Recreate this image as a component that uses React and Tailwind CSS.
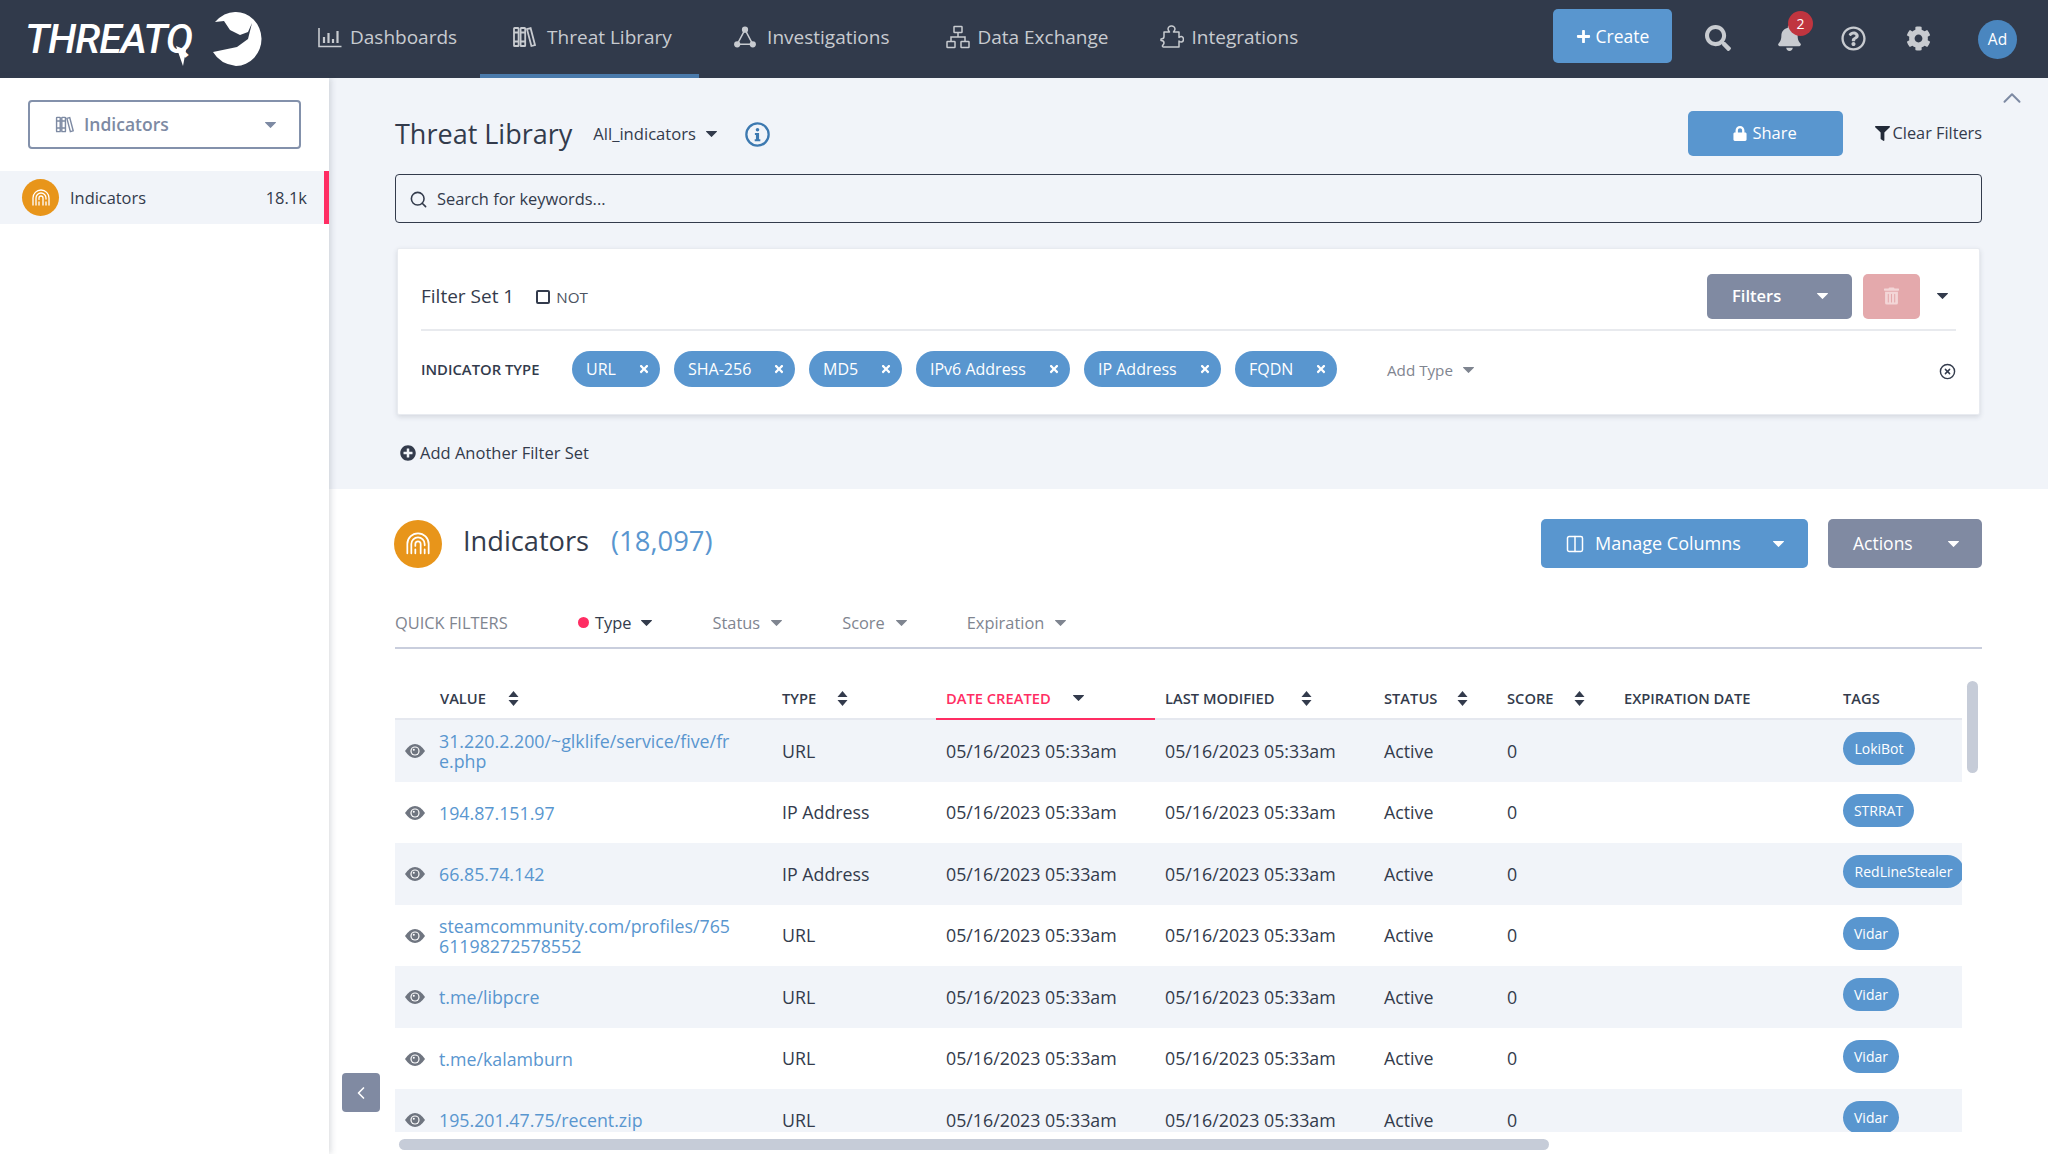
import React from "react";
import { FaSearch, FaBell, FaRegQuestionCircle, FaCog, FaPlus, FaLock, FaFilter, FaTrashAlt, FaPlusCircle, FaTimes } from "react-icons/fa";
import { Search, ChevronUp, ChevronLeft, CircleX, Columns2 } from "lucide-react";

const Caret = ({ className = "" }) => (
  <svg viewBox="0 0 11 6" className={`h-[6px] w-[11px] shrink-0 fill-current ${className}`}><path d="M0.5 0h10a.5.5 0 0 1 .35.85l-5 5a.5.5 0 0 1-.7 0l-5-5A.5.5 0 0 1 .5 0z" /></svg>
);
const Sort = () => (
  <svg viewBox="0 0 11 15" className="h-[15px] w-[11px] fill-[#333b4c]"><path d="M5.5 0l5 6H.5z" /><path d="M5.5 15l5-6H.5z" /></svg>
);
const Books = ({ className = "" }) => (
  <svg viewBox="0 0 24 24" className={className} fill="none" stroke="currentColor" strokeWidth="1.8">
    <rect x="2" y="3" width="4.6" height="18" rx=".6" /><rect x="8.6" y="3" width="4.6" height="18" rx=".6" />
    <path d="M15 4.2l3.6-1 4.4 16.8-3.6 1zM2 7.5h4.6M2 16.5h4.6M8.6 7.5h4.6M8.6 16.5h4.6" />
  </svg>
);
const Bars = ({ className = "" }) => (
  <svg viewBox="0 0 24 24" className={className} fill="none" stroke="currentColor" strokeWidth="1.6">
    <path d="M1 3v18.5h22.5" /><path strokeWidth="2.2" d="M6 18v-6M10.5 18V8M15 18v-4M19.5 18V6" />
  </svg>
);
const Graph = ({ className = "" }) => (
  <svg viewBox="0 0 24 24" className={className} fill="none" stroke="currentColor" strokeWidth="1.6">
    <path d="M12 4L3.5 20h17z" />
    <circle cx="12" cy="4" r="2.6" fill="currentColor" /><circle cx="3.5" cy="20" r="2.6" fill="currentColor" /><circle cx="20.5" cy="20" r="2.6" fill="currentColor" />
  </svg>
);
const Sitemap = ({ className = "" }) => (
  <svg viewBox="0 0 24 24" className={className} fill="none" stroke="currentColor" strokeWidth="1.5">
    <rect x="8" y="1.5" width="8" height="6" rx=".6" /><rect x="1" y="16.5" width="8" height="6" rx=".6" /><rect x="15" y="16.5" width="8" height="6" rx=".6" />
    <path d="M12 7.5V12M5 16.5V12h14v4.5" />
  </svg>
);
const PuzzleOutline = ({ className = "" }) => (
  <svg viewBox="0 0 24 24" className={className} fill="none" stroke="currentColor" strokeWidth="1.5" strokeLinejoin="round">
    <path d="M4 7h5.500C8.500 5.800 8 5 8 4a3.200 3.200 0 0 1 3.500-3A3.200 3.200 0 0 1 15 4c0 1-.5 1.800-1.500 3H19v5.500c1-.8 1.700-1.200 2.500-1 1.300.3 2 1.500 2 2.800s-.8 2.500-2 2.700c-.9.200-1.500-.2-2.500-1V22H3.500c-.7 0-1.300-.6-1-1.300.5-1 1.500-1.500 1.500-2.700 0-1.700-1.500-2.500-3-2.500v-1.500C3 14 4 13 4 11.500z" />
  </svg>
);
const InfoCircle = ({ className = "" }) => (
  <svg viewBox="0 0 24 24" className={className}>
    <circle cx="12" cy="12" r="10.700" fill="none" stroke="currentColor" strokeWidth="2.200" />
    <circle cx="12" cy="7.500" r="1.700" fill="currentColor" />
    <path d="M9.500 10.500h4v6h1.200v2H9.300v-2h1.200v-4h-1z" fill="currentColor" />
  </svg>
);
const Finger = ({ className = "" }) => (
  <svg viewBox="0 0 24 24" className={className} fill="none" stroke="#fff" strokeWidth="1.3" strokeLinecap="round">
    <path d="M4 19v-7a8 8 0 0 1 16 0v7" /><path d="M7 19v-7a5 5 0 0 1 10 0v1M17 16v3" /><path d="M10 19v-3M10 13.5V12a2 2 0 0 1 4 0v7" />
  </svg>
);
const Eye = () => (
  <svg viewBox="0 0 20 14" className="h-[14px] w-[20px]">
    <path d="M0 7C3 2.2 6.4 0 10 0s7 2.2 10 7c-3 4.8-6.4 7-10 7S3 11.800 0 7z" fill="#6f7580" />
    <circle cx="10" cy="7" r="4.600" fill="#fff" /><circle cx="10" cy="7" r="3.400" fill="#6f7580" /><circle cx="8.800" cy="5.800" r="1" fill="#fff" />
  </svg>
);
const Rhino = () => (
  <svg viewBox="0 0 52 54" className="h-[54px] w-[52px] fill-white">
    <path d="M3 10Q12 0 23 0A26 27 0 0 1 24 54Q8 52 1 40L25 35L36 27L40 11L36 20L28 23L18 18L12 9Z" />
  </svg>
);

const navs = [
  { label: "Dashboards", Icon: Bars, ml: "ml-[33px]", w: "w-6", tw: "gap-2" },
  { label: "Threat Library", Icon: Books, ml: "ml-[23px]", w: "w-6", tw: "gap-[11px]", active: true },
  { label: "Investigations", Icon: Graph, ml: "ml-[35px]", w: "w-[22px]", tw: "gap-[11px]" },
  { label: "Data Exchange", Icon: Sitemap, ml: "ml-[57px]", w: "w-6", tw: "gap-[7px]" },
  { label: "Integrations", Icon: PuzzleOutline, ml: "ml-[51px]", w: "w-6", tw: "gap-[8px]" },
];

const chips = [
  ["URL", "w-[88px]"], ["SHA-256", "w-[121px]"], ["MD5", "w-[93px]"], ["IPv6 Address", "w-[154px]"], ["IP Address", "w-[137px]"], ["FQDN", "w-[102px]"],
];

const rows = [
  ["31.220.2.200/~glklife/service/five/fre.php", "URL", "LokiBot", "w-[72px]"],
  ["194.87.151.97", "IP Address", "STRRAT", "w-[71px]"],
  ["66.85.74.142", "IP Address", "RedLineStealer", "w-[121px]"],
  ["steamcommunity.com/profiles/76561198272578552", "URL", "Vidar", "w-[56px]"],
  ["t.me/libpcre", "URL", "Vidar", "w-[56px]"],
  ["t.me/kalamburn", "URL", "Vidar", "w-[56px]"],
  ["195.201.47.75/recent.zip", "URL", "Vidar", "w-[56px]"],
];

const grid = "grid grid-cols-[35px_342px_164px_219px_219px_123px_117px_219px_129px]";

function HeadCell({ label, gap, red, sort = true }) {
  return (
    <div className={`relative flex items-center pl-[10px] ${gap} ${red ? "text-[#ff2d63]" : ""}`}>
      <span className="text-[14.7px] font-semibold leading-[20px]">{label}</span>
      {sort && !red && <Sort />}
      {red && <Caret className="text-[#333b4c]" />}
    </div>
  );
}

function Quick({ label, ml, gap, dark }) {
  return (
    <div className={`flex items-center ${ml} ${gap} ${dark ? "text-[#333b4c]" : "text-[#7f8590]"}`}>
      {dark && <span className="mr-[6px] h-[11px] w-[11px] rounded-full bg-[#ff2d63]" />}
      <span className={`text-[16.4px] ${dark ? "mr-[10px]" : ""}`}>{label}</span>
      <Caret className={dark ? "text-[#333b4c]" : "text-[#7f8590]"} />
    </div>
  );
}

export default function App() {
  return (
    <div className="relative flex h-[1154px] w-[2048px] flex-col overflow-hidden bg-white text-[#333b4c] [font-family:'Open_Sans',sans-serif]">
      <header className="flex h-[78px] shrink-0 items-stretch bg-[#313a4b] text-[#c8cbd0]">
        <div className="flex w-[285px] shrink-0 items-center pl-[25px]">
          <span className="relative w-[173px] text-[41px] font-medium italic leading-none tracking-[-1.1px] text-white [font-family:Roboto,sans-serif]">
            THREATQ
            <svg viewBox="0 0 12 20" className="absolute left-[150px] top-[27px] h-[20px] w-[12px] fill-white"><path d="M1 0l10 4-3 16z" /></svg>
          </span>
          <span className="ml-[14px]"><Rhino /></span>
        </div>
        {navs.map(({ label, Icon, ml, w, tw, active }) => (
          <div key={label} className={`flex items-center ${ml} ${tw} ${active ? "w-[219px] border-b-4 border-[#4a7aab] pl-[32px]" : "pb-[4px]"}`}>
            <Icon className={`${w} h-6 shrink-0`} />
            <span className="whitespace-nowrap text-[19px]">{label}</span>
          </div>
        ))}
        <div className="ml-auto flex items-center pr-[31px]">
          <button className="-mt-[6px] flex h-[54px] w-[119px] items-center justify-center gap-[5px] rounded-[5px] bg-[#5996cf] text-[17.5px] text-white"><FaPlus className="h-[15px] w-[15px]" />Create</button>
          <FaSearch className="-mt-[2px] ml-[33px] h-[26px] w-[26px]" />
          <div className="relative ml-[47px] h-[26px] w-[23px] -mt-[2px]">
            <FaBell className="h-[26px] w-[23px]" />
            <span className="absolute left-[10px] top-[-14px] flex h-[25px] w-[25px] items-center justify-center rounded-full bg-[#c0353f] text-[14px] text-white">2</span>
          </div>
          <FaRegQuestionCircle className="-mt-[2px] ml-[40px] h-[25px] w-[25px]" />
          <FaCog className="-mt-[2px] ml-[40px] h-[25px] w-[25px]" />
          <span className="ml-[47px] flex h-[39px] w-[39px] items-center justify-center rounded-full bg-[#4a86bf] pt-[2px] text-[15.5px] text-white">Ad</span>
        </div>
      </header>

      <div className="flex min-h-0 flex-1">
        <aside className="relative z-10 w-[329px] shrink-0 bg-white shadow-[2px_0_6px_rgba(60,70,90,0.18)]">
          <div className="mx-[28px] mt-[22px] flex h-[49px] w-[273px] items-center rounded-[4px] border-2 border-[#8391ab] pl-[25px] pr-[23px] text-[#7d8aa3]">
            <Books className="h-[19px] w-[19px]" />
            <span className="ml-[10px] text-[17.5px] font-semibold">Indicators</span>
            <Caret className="ml-auto" />
          </div>
          <div className="mt-[22px] flex h-[53px] items-center border-r-[5px] border-[#ff2d63] bg-[#f1f4f9] pl-[22px] pr-[17px]">
            <span className="flex h-[37px] w-[37px] items-center justify-center rounded-full bg-[#e8951a]"><Finger className="h-[24px] w-[24px]" /></span>
            <span className="ml-[11px] mt-[1px] text-[16.4px]">Indicators</span>
            <span className="ml-auto mt-[1px] text-[16.5px]">18.1k</span>
          </div>
        </aside>

        <main className="flex min-w-0 flex-1 flex-col">
          <section className="h-[411px] shrink-0 bg-[#f1f4f9] px-[66px] pt-[33px]">
            <div className="flex h-[45px] items-center">
              <h1 className="text-[27px] font-normal leading-none">Threat Library</h1>
              <span className="ml-[21px] mt-[2px] text-[16.6px]">All_indicators</span>
              <Caret className="ml-[10px]" />
              <InfoCircle className="ml-[28px] mt-[2px] h-[25px] w-[25px] text-[#3d79b0]" />
              <button className="ml-auto flex h-[45px] w-[155px] items-center justify-center gap-[5px] rounded-[5px] bg-[#5996cf] text-[16.5px] text-white"><FaLock className="h-[15px] w-[14px]" />Share</button>
              <div className="ml-[32px] flex items-center gap-[3px] text-[16.3px]"><FaFilter className="h-[15px] w-[15px] text-[#222a38]" />Clear Filters</div>
            </div>
            <div className="mt-[18px] flex h-[49px] items-center rounded-[4px] border border-[#333b4c] pl-[13px] pt-[2px]">
              <Search className="h-[19px] w-[19px]" strokeWidth={2} />
              <span className="ml-[9px] text-[16.4px]">Search for keywords...</span>
            </div>
            <div className="mx-[2px] mt-[25px] h-[167px] rounded-[2px] border border-[#e8ebf0] bg-white px-[23px] shadow-[0_2px_5px_rgba(60,70,90,0.16)]">
              <div className="flex h-[82px] items-center border-b-2 border-[#e8eaee] pt-[14px]">
                <span className="text-[19px]">Filter Set 1</span>
                <span className="ml-[22px] mt-[2px] h-[14px] w-[14px] rounded-[2px] border-2 border-[#333b4c]" />
                <span className="ml-[6px] mt-[2px] text-[15.2px] text-[#4c5361]">NOT</span>
                <button className="ml-auto flex h-[45px] w-[145px] items-center rounded-[5px] bg-[#808aa2] pl-[25px] pr-[24px] text-[16.5px] font-semibold text-white">Filters<Caret className="ml-auto h-[5px] w-[10px]" /></button>
                <button className="ml-[11px] flex h-[45px] w-[57px] items-center justify-center rounded-[5px] bg-[#e4a9ac]"><FaTrashAlt className="h-[18px] w-[15px] text-[#f3d6d7]" /></button>
                <Caret className="ml-[17px] mr-[8px]" />
              </div>
              <div className="flex items-center pt-[20px]">
                <span className="w-[151px] text-[14.8px] font-semibold">INDICATOR TYPE</span>
                <div className="flex gap-[14px]">
                  {chips.map(([c, w]) => (
                    <span key={c} className={`flex h-[36px] ${w} items-center rounded-full bg-[#5996cf] pl-[14px] pr-[10px] text-[16px] text-white`}>{c}<FaTimes className="ml-auto h-[12px] w-[12px]" /></span>
                  ))}
                </div>
                <span className="ml-[50px] mt-[2px] text-[15.2px] text-[#7f8590]">Add Type</span>
                <Caret className="ml-[10px] mt-[2px] h-[5px] w-[10px] text-[#7f8590]" />
                <CircleX className="ml-auto mt-[4px] h-[17px] w-[17px]" strokeWidth={2} />
              </div>
            </div>
            <div className="ml-[5px] mt-[26px] flex items-center gap-[4px] text-[16.5px]"><FaPlusCircle className="h-[16px] w-[16px]" />Add Another Filter Set</div>
          </section>

          <section className="min-h-0 flex-1 px-[66px] pt-[30px]">
            <div className="flex h-[49px] items-center">
              <span className="-ml-[1px] flex h-[48px] w-[48px] items-center justify-center rounded-full bg-[#e8951a]"><Finger className="h-[32px] w-[32px]" /></span>
              <span className="ml-[21px] -mt-[5px] text-[27.2px]">Indicators</span>
              <span className="ml-[22px] -mt-[5px] text-[27.4px] text-[#5996cf]">(18,097)</span>
              <button className="ml-auto flex h-[49px] w-[267px] items-center rounded-[5px] bg-[#5996cf] pl-[24px] pr-[24px] text-[18px] text-white"><Columns2 className="h-[20px] w-[20px]" strokeWidth={1.8} /><span className="ml-[10px]">Manage Columns</span><Caret className="ml-auto" /></button>
              <button className="ml-[20px] flex h-[49px] w-[154px] items-center rounded-[5px] bg-[#808aa2] pl-[25px] pr-[23px] text-[17.5px] text-white">Actions<Caret className="ml-auto" /></button>
            </div>
            <div className="mt-[32px] flex h-[49px] items-center border-b-2 border-[#c9cedd] pb-[1px]">
              <span className="w-[183px] text-[16.4px] text-[#7f8590]">QUICK FILTERS</span>
              <Quick label="Type" dark ml="" gap="" />
              <Quick label="Status" ml="ml-[60px]" gap="gap-[11px]" />
              <Quick label="Score" ml="ml-[60px]" gap="gap-[11px]" />
              <Quick label="Expiration" ml="ml-[60px]" gap="gap-[11px]" />
            </div>
            <div className="h-[483px] w-[1567px] overflow-hidden">
              <div className={`${grid} h-[71px] items-stretch border-b-2 border-[#e5e8ef]`}>
                <div />
                <div className="flex items-end pb-[10px]"><HeadCell label="VALUE" gap="gap-[22px]" /></div>
                <div className="flex items-end pb-[10px]"><HeadCell label="TYPE" gap="gap-[21px]" /></div>
                <div className="-mb-[2px] flex items-end border-b-2 border-[#ff2d63] pb-[10px]"><HeadCell label="DATE CREATED" gap="gap-[22px]" red /></div>
                <div className="flex items-end pb-[10px]"><HeadCell label="LAST MODIFIED" gap="gap-[26px]" /></div>
                <div className="flex items-end pb-[10px]"><HeadCell label="STATUS" gap="gap-[20px]" /></div>
                <div className="flex items-end pb-[10px]"><HeadCell label="SCORE" gap="gap-[20px]" /></div>
                <div className="flex items-end pb-[10px]"><HeadCell label="EXPIRATION DATE" sort={false} /></div>
                <div className="flex items-end pb-[10px]"><HeadCell label="TAGS" sort={false} /></div>
              </div>
              {rows.map(([v, t, tag, w], i) => (
                <div key={v} className={`${grid} h-[61.5px] items-center pt-[1px] text-[17.8px] ${i % 2 === 0 ? "bg-[#f1f4f9]" : "bg-white"}`}>
                  <div className="flex justify-end pr-[5px]"><Eye /></div>
                  <div className="pl-[9px] pr-[37px] leading-[20px] text-[#5996cf] [overflow-wrap:anywhere]">{v}</div>
                  <div className="pl-[10px]">{t}</div>
                  <div className="pl-[10px]">05/16/2023 05:33am</div>
                  <div className="pl-[10px]">05/16/2023 05:33am</div>
                  <div className="pl-[10px]">Active</div>
                  <div className="pl-[10px]">0</div>
                  <div />
                  <div className="h-full overflow-hidden pl-[10px] pt-[11px]">
                    <span className={`flex h-[33px] ${w} items-center justify-center rounded-full bg-[#5996cf] text-[14px] font-medium text-white`}>{tag}</span>
                  </div>
                </div>
              ))}
            </div>
          </section>
        </main>
      </div>

      <ChevronUp className="absolute left-[1997px] top-[83px] h-[30px] w-[30px] text-[#7d8aa3]" strokeWidth={1.6} />
      <div className="absolute left-[342px] top-[1073px] flex h-[39px] w-[38px] items-center justify-center rounded-[4px] bg-[#808aa2] text-white"><ChevronLeft className="h-[20px] w-[20px]" strokeWidth={2} /></div>
      <div className="absolute left-[1967px] top-[681px] h-[92px] w-[11px] rounded-full bg-[#c6ccd8]" />
      <div className="absolute left-[399px] top-[1139px] h-[11px] w-[1150px] rounded-full bg-[#c6ccd8]" />
    </div>
  );
}
